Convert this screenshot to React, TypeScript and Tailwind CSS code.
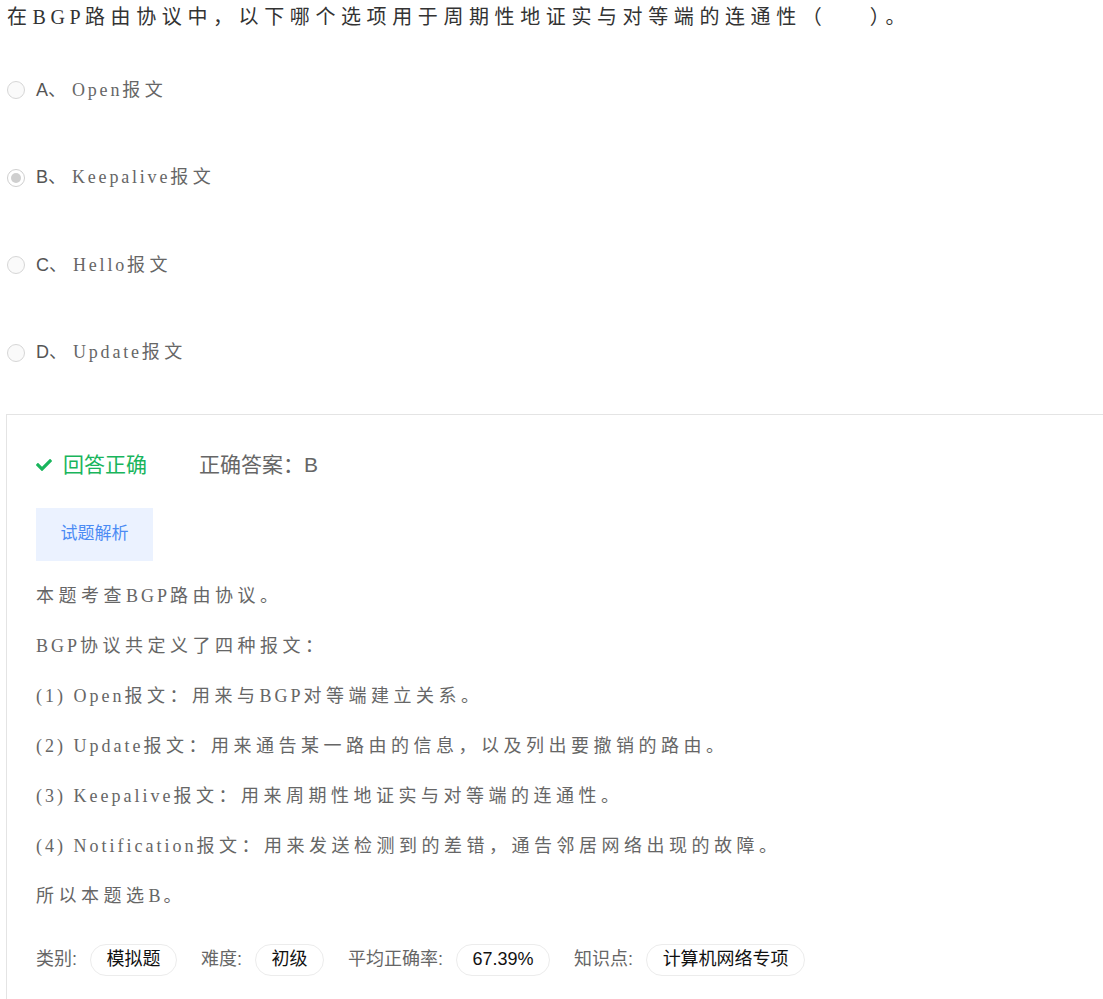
import { FaCheck } from "react-icons/fa";

const serif = "font-['Liberation_Serif','Noto_Sans_CJK_SC',serif]";
const sans = "font-['Liberation_Sans','Noto_Sans_CJK_SC',sans-serif]";

// latin runs get a tighter letter spacing than the CJK text around them
function Mixed({ text, latin }: { text: string; latin: string }) {
  const parts = text.split(/([\x20-\x7E]+)/).filter(Boolean);
  return (
    <>
      {parts.map((p, i) =>
        /^[\x20-\x7E]+$/.test(p) ? (
          <span key={i} className={latin}>
            {p}
          </span>
        ) : (
          <span key={i}>{p}</span>
        )
      )}
    </>
  );
}

const options = [
  { key: "A", text: "Open报文", checked: false },
  { key: "B", text: "Keepalive报文", checked: true },
  { key: "C", text: "Hello报文", checked: false },
  { key: "D", text: "Update报文", checked: false },
];

const analysis = [
  "本题考查BGP路由协议。",
  "BGP协议共定义了四种报文：",
  "(1) Open报文：用来与BGP对等端建立关系。",
  "(2) Update报文：用来通告某一路由的信息，以及列出要撤销的路由。",
  "(3) Keepalive报文：用来周期性地证实与对等端的连通性。",
  "(4) Notification报文：用来发送检测到的差错，通告邻居网络出现的故障。",
  "所以本题选B。",
];

const meta = [
  { label: "类别:", value: "模拟题" },
  { label: "难度:", value: "初级" },
  { label: "平均正确率:", value: "67.39%" },
  { label: "知识点:", value: "计算机网络专项" },
];

function Radio({ checked }: { checked: boolean }) {
  return (
    <span
      className={
        "flex h-[18px] w-[18px] shrink-0 items-center justify-center rounded-full border " +
        (checked ? "border-[#cfcfcf] bg-white" : "border-[#d6d6d6] bg-[#fafafa]")
      }
    >
      {checked && <span className="h-[10px] w-[10px] rounded-full bg-[#cfcfcf]" />}
    </span>
  );
}

export default function App() {
  return (
    <div className="min-h-[999px] w-[1103px] overflow-hidden bg-white">
      <p
        className={`${serif} pl-[7px] pt-[2px] text-[20px] leading-[30px] tracking-[5.6px] text-[#333]`}
      >
        <Mixed
          text={"在BGP路由协议中，以下哪个选项用于周期性地证实与对等端的连通性（\u00a0\u00a0\u00a0\u00a0）。"}
          latin="tracking-[4.5px]"
        />
      </p>

      <div className="mt-[36px] flex flex-col gap-[43.5px] pl-[7px]">
        {options.map((o) => (
          <label key={o.key} className="flex h-[44px] items-center gap-[11px]">
            <Radio checked={o.checked} />
            <span className="flex items-center">
              <span className={`${sans} mr-[6px] text-[18px] text-[#555]`}>{o.key}、</span>
              <span className={`${serif} text-[18px] tracking-[4.5px] text-[#666]`}>
                <Mixed text={o.text} latin="tracking-[2.8px]" />
              </span>
            </span>
          </label>
        ))}
      </div>

      <div className="ml-[6px] mt-[39px] border-l border-t border-[#e4e4e4] pb-[40px] pl-[29px] pt-[35px]">
        <div className={`${sans} flex h-[30px] items-center text-[21px]`}>
          <span className="flex items-center gap-[11px] text-[#19b55c]">
            <FaCheck className="h-[16px] w-[16px]" />
            回答正确
          </span>
          <span className="ml-[52px] text-[#666]">正确答案：B</span>
        </div>

        <button
          type="button"
          className={`${sans} mt-[28px] h-[53px] w-[117px] bg-[#ebf2ff] text-[17px] text-[#4b8bf4]`}
        >
          试题解析
        </button>

        <div className={`${serif} mt-[10px] text-[18px] leading-[50px] tracking-[4.5px] text-[#666]`}>
          {analysis.map((line) => (
            <p key={line}>
              <Mixed text={line} latin="tracking-[3px]" />
            </p>
          ))}
        </div>

        <div className={`${sans} mt-[23px] flex items-center text-[18px]`}>
          {meta.map((m) => (
            <div key={m.label} className="mr-[24px] flex items-center gap-[13px]">
              <span className="text-[#666]">{m.label}</span>
              <span className="flex h-[32px] items-center rounded-full border border-[#ececec] px-[15.5px] text-[#111]">
                {m.value}
              </span>
            </div>
          ))}
        </div>
      </div>
    </div>
  );
}
